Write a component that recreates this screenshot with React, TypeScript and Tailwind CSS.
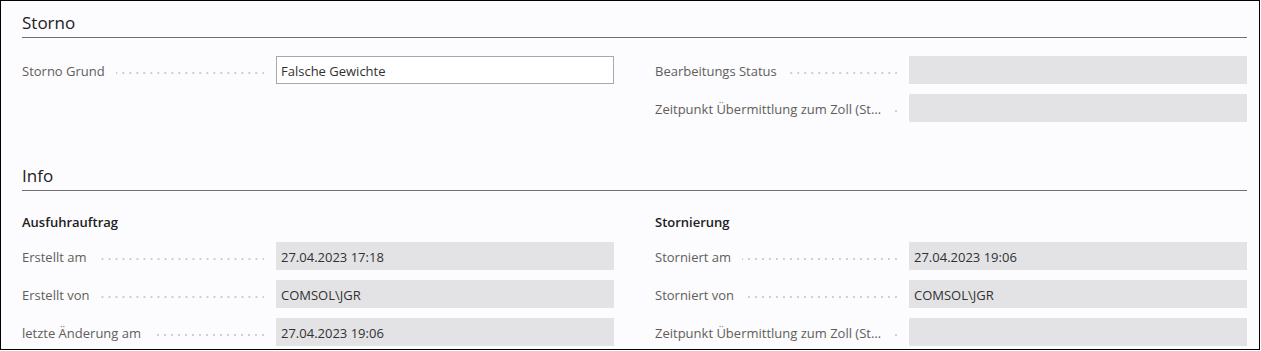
import React from "react";

type Field = { label: string; value?: string; editable?: boolean };

const leader =
  "h-[2px] flex-1 min-w-[2px] ml-[11px] mr-[12px] mt-[3px] bg-[linear-gradient(to_left,#cfcfd2_2px,transparent_2px)] bg-[length:7px_2px] bg-repeat-x bg-right";

function Row({ label, value, editable }: Field) {
  return (
    <div className="flex items-center h-[28px]">
      <div className="flex items-center w-[254px] shrink-0 pt-[3px]">
        <span className="truncate text-[13px] text-[#605e5c]">{label}</span>
        <div className={leader}></div>
      </div>
      {editable ? (
        <div className="flex-1 h-[28px] border border-[#a8a8ab] bg-white flex items-center pt-[3px] px-[4px] text-[13px] text-[#323130]">
          {value}
        </div>
      ) : (
        <div className="flex-1 h-[28px] bg-[#e3e3e6] flex items-center pt-[3px] px-[5px] text-[13px] text-[#323130]">
          {value}
        </div>
      )}
    </div>
  );
}

function Title({ text, top }: { text: string; top: string }) {
  return (
    <div className={top}>
      <div className="leading-[24px] text-[17px] text-[#212121] mb-[2px]">{text}</div>
      <div className="h-px bg-[#707070]"></div>
    </div>
  );
}

export default function App() {
  return (
    <div
      className="w-[1260px] h-[350px] border border-black bg-[#fcfbfd] pl-[21px] pr-[12px] overflow-hidden"
      style={{ fontFamily: '"Open Sans", "Noto Sans", sans-serif' }}
    >
      <Title text="Storno" top="pt-[10px]" />
      <div className="grid grid-cols-2 gap-x-[41px] mt-[18px]">
        <div className="flex flex-col gap-[10px]">
          <Row label="Storno Grund" value="Falsche Gewichte" editable />
        </div>
        <div className="flex flex-col gap-[10px]">
          <Row label="Bearbeitungs Status" />
          <Row label="Zeitpunkt Übermittlung zum Zoll (Storno)" />
        </div>
      </div>

      <Title text="Info" top="mt-[42px]" />
      <div className="grid grid-cols-2 gap-x-[41px] mt-[20px]">
        <div className="flex flex-col gap-[10px]">
          <div className="leading-[20px] pt-[1px] text-[13px] font-semibold text-[#212121]">Ausfuhrauftrag</div>
          <Row label="Erstellt am" value="27.04.2023 17:18" />
          <Row label="Erstellt von" value="COMSOL\JGR" />
          <Row label="letzte Änderung am" value="27.04.2023 19:06" />
        </div>
        <div className="flex flex-col gap-[10px]">
          <div className="leading-[20px] pt-[1px] text-[13px] font-semibold text-[#212121]">Stornierung</div>
          <Row label="Storniert am" value="27.04.2023 19:06" />
          <Row label="Storniert von" value="COMSOL\JGR" />
          <Row label="Zeitpunkt Übermittlung zum Zoll (Storno)" />
        </div>
      </div>
    </div>
  );
}
